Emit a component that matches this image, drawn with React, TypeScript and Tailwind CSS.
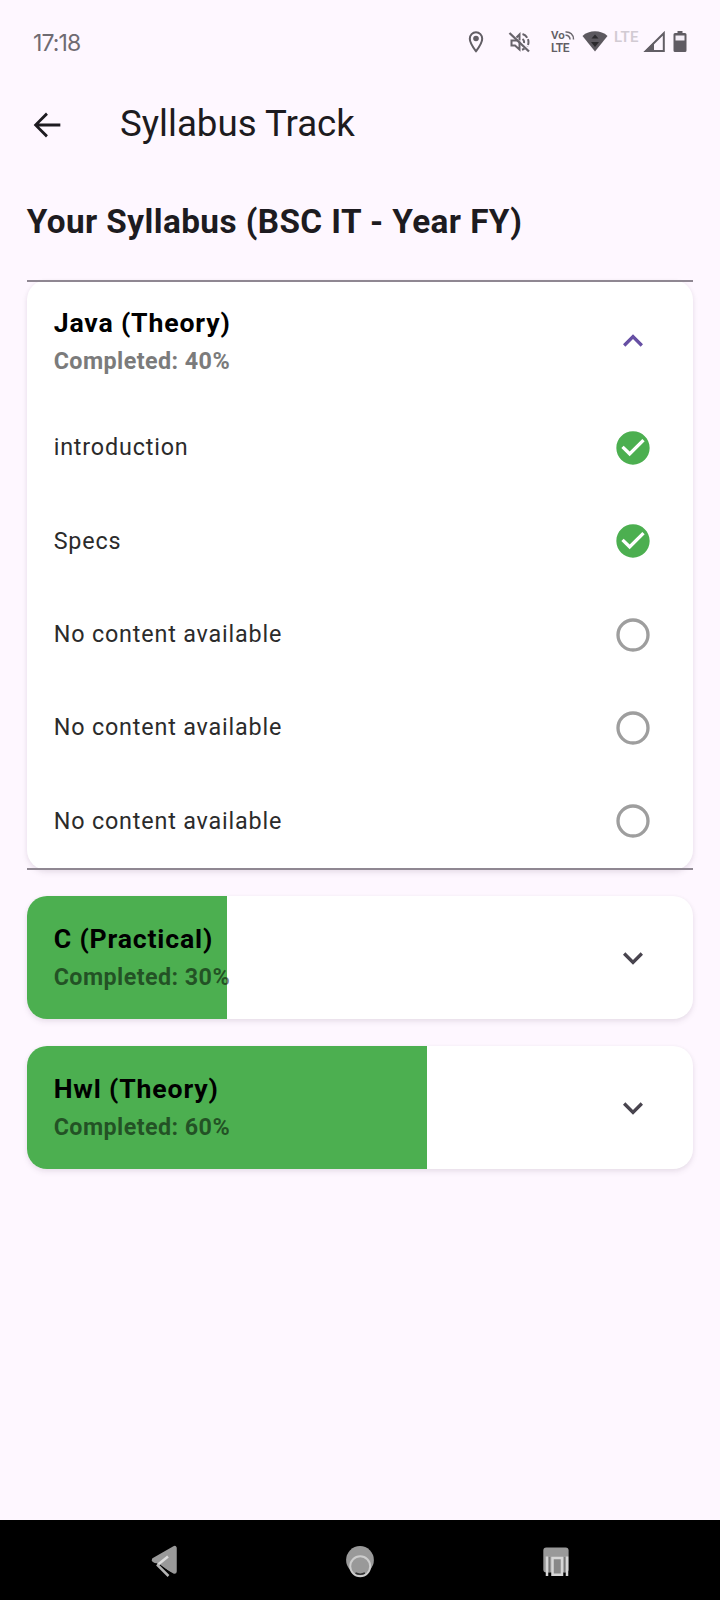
import React from "react";

type Topic = { name: string; done: boolean };
type Subject = { name: string; percent: number; topics?: Topic[] };

const subjects: Subject[] = [
  {
    name: "Java (Theory)",
    percent: 40,
    topics: [
      { name: "introduction", done: true },
      { name: "Specs", done: true },
      { name: "No content available", done: false },
      { name: "No content available", done: false },
      { name: "No content available", done: false },
    ],
  },
  { name: "C (Practical)", percent: 30 },
  { name: "Hwl (Theory)", percent: 60 },
];

function StatusBar() {
  return (
    <div className="flex h-[78px] items-start pl-[33px] pt-[28px] text-[#6f6b72]">
      <span className="mt-px w-[433px] font-['Inter',sans-serif] text-[23px] leading-[28px] tracking-[-0.9px]">17:18</span>
      <svg className="mt-[1px] h-6 w-5 shrink-0" viewBox="0 0 20 24" fill="none">
        <path d="M10 22.2C6.500 17.500 3.800 14 3.800 9.700a6.200 6.500 0 0 1 12.400 0C16.200 14 13.500 17.500 10 22.200Z" stroke="#625e65" strokeWidth="2" />
        <circle cx="10" cy="9.500" r="2.800" fill="#625e65" />
      </svg>
      <svg className="ml-[22px] mt-[2px] h-6 w-6 shrink-0" viewBox="0 0 24 24" fill="none" stroke="#67636a" strokeWidth="2">
        <path d="M1.500 3 21 21.500" strokeWidth="2.300" />
        <path d="M10 10.500H3.500v5h3.500l4.500 4v-8M8.500 7.500l3-3v6" />
        <path d="M14.500 9a4 4 0 0 1 1.500 4M14.500 4a8.500 8.500 0 0 1 6 8 8.500 8.500 0 0 1-1.200 4.500M14 19.800l2.500-1" strokeDasharray="6 1.500" />
      </svg>
      <div className="ml-[19px] mt-[2px] flex w-6 shrink-0 flex-col font-['Roboto',sans-serif] font-semibold text-[#625e65]">
        <div className="flex h-[11px] items-center">
          <span className="text-[11.500px] leading-[11px] tracking-[0.1px]">Vo</span>
          <svg className="h-[11px] w-[10px]" viewBox="0 0 10 11" fill="none" stroke="#6a666d" strokeWidth="1.500">
            <path d="M.5 2a7 7 0 0 1 8 7.500M.5 5.300a4 4 0 0 1 4.500 4.200" />
          </svg>
        </div>
        <span className="mt-px text-[12px] leading-[12px] tracking-[-0.3px]">LTE</span>
      </div>
      <svg className="ml-[7px] mt-[2px] h-[22px] w-[26px] shrink-0" viewBox="0 0 26 22">
        <path d="M.5 6C7-.2 19-.2 25.500 6L13 21.500Z" fill="#5c585f" />
        <path d="m13 4.500 3.500 4h-7ZM9 12h8L13 17Z" fill="#2b292d" />
      </svg>
      <span className="ml-[6px] mt-[1px] w-[28px] shrink-0 font-['Roboto',sans-serif] text-[15px] font-semibold leading-[16px] tracking-[0.2px] text-[#d2cbd3]">LTE</span>
      <svg className="ml-px mt-[3px] h-[22px] w-[24px] shrink-0" viewBox="0 0 24 22">
        <path d="M2.800 20H20.800V2.200Z" fill="none" stroke="#625e65" strokeWidth="2" />
        <path d="M1 21 11 11v10Z" fill="#625e65" />
      </svg>
      <svg className="ml-[6px] mt-[3px] h-[22px] w-[14px] shrink-0" viewBox="0 0 14 22">
        <path d="M4.500 0h5v2H12q1.500 0 1.500 1.500v16Q13.500 21 12 21H2Q.5 21 .5 19.500v-16Q.5 2 2 2h2.500Z" fill="#605c63" />
        <path d="M2.500 4.500h9v5h-9Z" fill="#f4eef7" />
      </svg>
    </div>
  );
}

function Chevron({ up }: { up?: boolean }) {
  return (
    <svg className="size-10 shrink-0" viewBox="0 0 24 24">
      {up ? (
        <path d="m12 8-6 6 1.410 1.410L12 10.830l4.590 4.580L18 14z" fill="#6750a4" />
      ) : (
        <path d="M16.590 8.590 12 13.170 7.410 8.590 6 10l6 6 6-6z" fill="#49454f" />
      )}
    </svg>
  );
}

function StateIcon({ done }: { done: boolean }) {
  return (
    <svg className="size-10 shrink-0" viewBox="0 0 24 24">
      {done ? (
        <path
          fill="#4caf50"
          d="M12 2C6.480 2 2 6.480 2 12s4.480 10 10 10 10-4.480 10-10S17.520 2 12 2zm-2 15-5-5 1.410-1.410L10 14.170l7.590-7.590L19 8l-9 9z"
        />
      ) : (
        <circle cx="12" cy="12" r="9" fill="none" stroke="#9e9e9e" strokeWidth="2" />
      )}
    </svg>
  );
}

function SubjectCard({ subject }: { subject: Subject }) {
  const open = Boolean(subject.topics);
  return (
    <section className="relative">
      <div className="relative overflow-hidden rounded-[20px] bg-white py-[1.67px] shadow-[0_3px_6px_rgba(50,30,60,0.08),0_1px_4px_rgba(50,30,60,0.05)]">
        {!open && (
          <div className="absolute inset-y-0 left-0 bg-[#4caf50]" style={{ width: `${subject.percent}%` }} />
        )}
        <div className="relative flex h-[120px] items-center justify-between pl-[27px] pr-[40px]">
          <div className="flex flex-col gap-[2px] pb-px font-bold">
            <h2 className="text-[26.67px] leading-[38px] tracking-[0.83px] text-black">{subject.name}</h2>
            <p className={`text-[23.33px] leading-[34px] tracking-[0.42px] ${open ? "text-[#7b7b7b]" : "text-black/54"}`}>
              Completed: {subject.percent}%
            </p>
          </div>
          <Chevron up={open} />
        </div>
        {subject.topics?.map((topic, i) => (
          <div key={i} className="flex h-[93.33px] items-center justify-between pl-[27px] pr-[40px]">
            <span className="pb-px text-[23.33px] leading-[34px] tracking-[0.83px] text-[#2b2b2b]">{topic.name}</span>
            <StateIcon done={topic.done} />
          </div>
        ))}
      </div>
      {open && <div className="pointer-events-none absolute inset-0 border-y-2 border-[#8f8792]" />}
    </section>
  );
}

function NavBar() {
  return (
    <nav className="flex h-20 items-center justify-between bg-black px-36">
      <svg className="size-10" viewBox="0 0 40 40">
        <path d="M10 20 30.500 8.200v23.300Z" fill="#999" stroke="#999" strokeWidth="4.500" strokeLinejoin="round" />
        <path d="m10 23.500 4-.5 14 10.500 1 3.500h-5Z" fill="#000" />
        <path d="m13.500 25 10.500-8.500" fill="none" stroke="#dcdcdc" strokeWidth="2.500" />
        <path d="m13 24.500 11.500 11.500" fill="none" stroke="#b4b4b4" strokeWidth="2.500" />
      </svg>
      <svg className="size-10" viewBox="0 0 40 40">
        <circle cx="20" cy="20" r="13.900" fill="#999" />
        <circle cx="20.200" cy="26.300" r="10" fill="#999" stroke="#cdcdcd" strokeWidth="2" />
        <path d="M15.500 33q4.700 2.400 9.400 0" fill="none" stroke="#333" strokeWidth="1.500" />
      </svg>
      <svg className="size-10" viewBox="0 0 40 40">
        <rect x="7.300" y="7.500" width="25.300" height="25" rx="3" fill="#999" />
        <path d="M13.300 32V17M28.800 32V17" stroke="#777" strokeWidth="1.500" />
        <path d="M11 16.500V36M31 16.500V36" stroke="#d6d6d6" strokeWidth="2.500" />
        <path d="M16.500 18h9.500v16.700h-9.500Z" fill="#888" stroke="#d6d6d6" strokeWidth="2.500" />
      </svg>
    </nav>
  );
}

export default function App() {
  return (
    <div className="flex h-[1600px] w-[720px] flex-col overflow-hidden bg-[#fef7ff] font-['Roboto',sans-serif]">
      <StatusBar />
      <header className="flex h-[93.33px] items-center pl-[26.67px] text-[#1d1b20]">
        <svg className="size-10 shrink-0" viewBox="0 0 24 24" fill="currentColor">
          <path d="M20 11.050H7.200l5.350-5.250L11.400 4.500 4 12l7.400 7.500 1.150-1.300-5.350-5.250H20z" />
        </svg>
        <h1 className="ml-[53.33px] pb-[2px] text-[36.67px] leading-[46px]">Syllabus Track</h1>
      </header>
      <main className="flex flex-1 flex-col px-[26.67px] pt-[27.67px]">
        <h2 className="text-[33.33px] font-bold leading-[46.67px] tracking-[0.42px] text-[#1d1b20]">Your Syllabus (BSC IT - Year FY)</h2>
        <div className="mt-[33.9px] flex flex-col gap-[26.67px]">
          {subjects.map((s) => (
            <SubjectCard key={s.name} subject={s} />
          ))}
        </div>
      </main>
      <NavBar />
    </div>
  );
}
